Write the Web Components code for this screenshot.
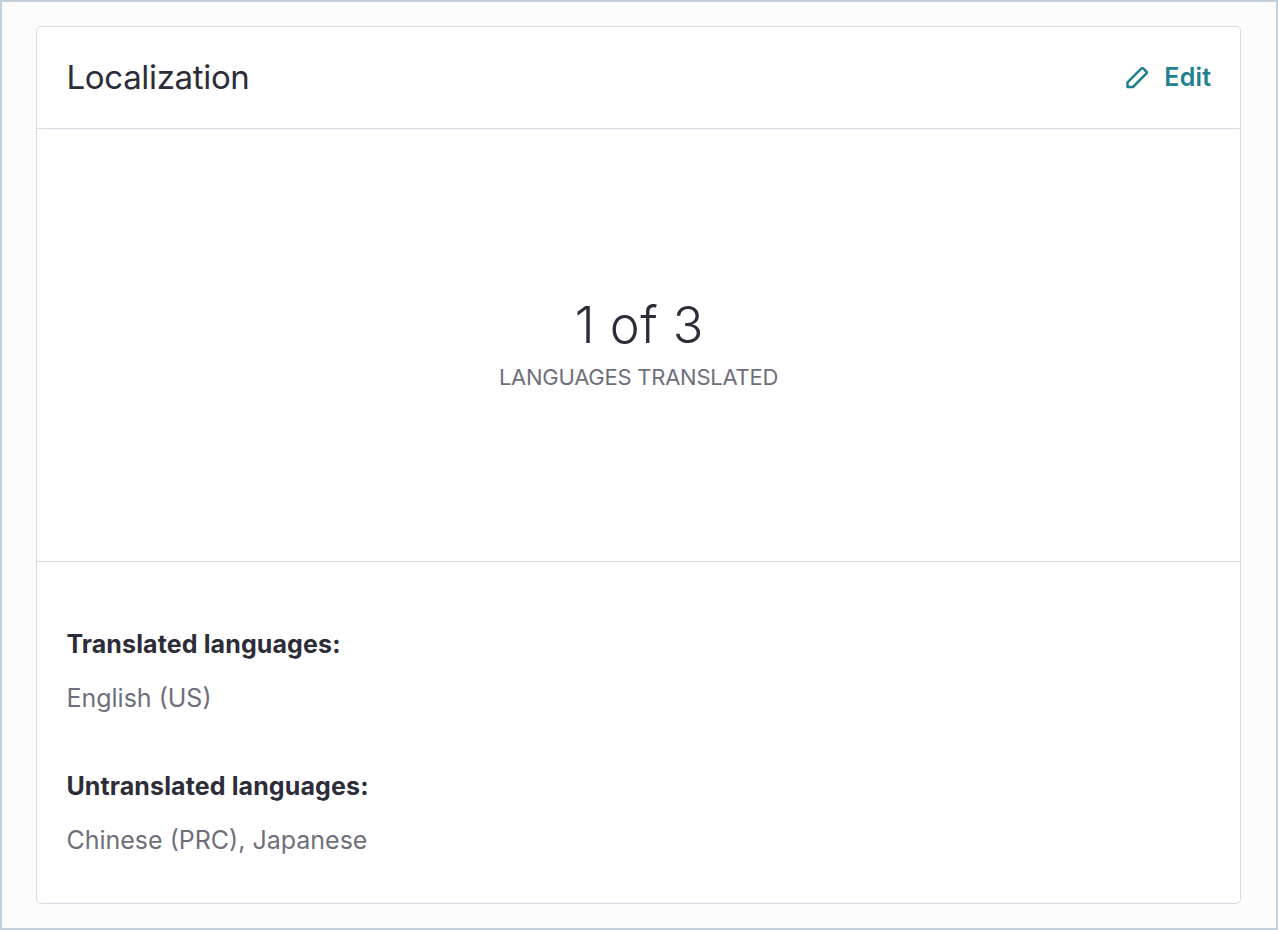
<!DOCTYPE html>
<html lang="en"><head><meta charset="utf-8"><title>Localization</title>
<style>
body{margin:0;font-family:Inter,"Liberation Sans",sans-serif;color:#2d2d3a}
</style></head><body>
<app-frame><info-card>
<span slot="title">Localization</span>
<edit-button slot="action">Edit</edit-button>
<big-stat slot="stat" value="1 of 3">Languages translated</big-stat>
<language-group label="Translated languages:">English (US)</language-group>
<language-group label="Untranslated languages:">Chinese (PRC), Japanese</language-group>
</info-card></app-frame>
<script>
const define=(name,html,setup)=>customElements.define(name,class extends HTMLElement{
  constructor(){super();this.attachShadow({mode:"open"}).innerHTML=html;}
  connectedCallback(){if(setup)setup(this);}
});
define("app-frame",`<style>:host{display:flex;box-sizing:border-box;width:1278px;height:930px;border:2px solid #c1d0da;background:#fcfcfd;padding:24px 35px 24px 34px}::slotted(*){flex:1}</style><slot></slot>`);
define("info-card",`<style>
:host{display:flex;flex-direction:column;box-sizing:border-box;background:#fff;border:1px solid #dadae6;border-radius:5px}
header{display:flex;justify-content:space-between;align-items:center;box-sizing:border-box;height:102px;padding:0 28.6px 2px 29.5px;border-bottom:1px solid #dadae6}
h2{margin:0;font-size:33px;line-height:40px;font-weight:370;letter-spacing:-.33px}
.stat{display:grid;place-items:center;box-sizing:border-box;height:433px;padding-bottom:7px;border-bottom:1px solid #dadae6}
.list{display:flex;flex-direction:column;gap:56px;padding:66px 29px 0 29.4px}
</style><header><h2><slot name="title"></slot></h2><slot name="action"></slot></header><div class="stat"><slot name="stat"></slot></div><div class="list"><slot></slot></div>`);
define("edit-button",`<style>:host{display:flex;align-items:center;gap:13px;color:#1f8090;font-size:25px;line-height:32px;font-weight:600;letter-spacing:.25px}svg{display:block}</style>
<svg width="26" height="26" viewBox="0 0 26 26" fill="none" stroke="currentColor" stroke-width="2.5" stroke-linejoin="round"><path d="M2.5 23v-4.6L16.7 4.2h1.2l3.8 3.8v1.2L7.9 23z"/></svg><span><slot></slot></span>`);
define("big-stat",`<style>:host{display:block;text-align:center}.v{font-size:50.5px;line-height:64px;font-weight:300;letter-spacing:.45px;padding-left:1.5px}.l{font-size:22px;line-height:28px;color:#6f6f7b;text-transform:uppercase;letter-spacing:-.25px;margin-top:6px}</style><div class="v"></div><div class="l"><slot></slot></div>`,e=>e.shadowRoot.querySelector(".v").textContent=e.getAttribute("value"));
define("language-group",`<style>:host{display:block;font-size:25px;line-height:32px}.h{font-weight:700;letter-spacing:.12px}.t{margin-top:22px;color:#6f6f7b;font-weight:380}</style><div class="h"></div><div class="t"><slot></slot></div>`,e=>e.shadowRoot.querySelector(".h").textContent=e.getAttribute("label"));
</script></body></html>
